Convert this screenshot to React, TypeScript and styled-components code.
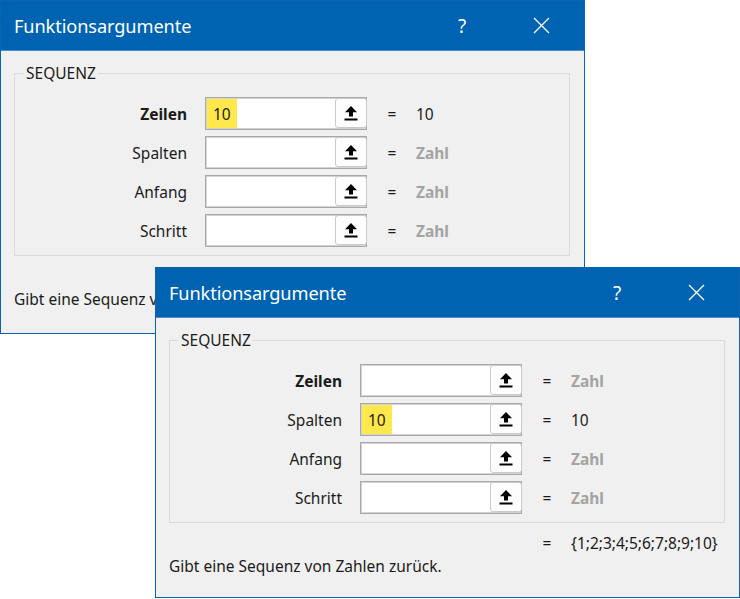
import React from 'react';
import styled, { createGlobalStyle } from 'styled-components';

const GlobalStyle = createGlobalStyle`
  html, body {
    margin: 0;
    padding: 0;
    background: #ffffff;
  }
  body {
    font-family: "Noto Sans", "Open Sans", sans-serif;
    color: #1b1b1b;
  }
`;

const Desktop = styled.div`
  position: relative;
  width: 740px;
  height: 599px;
  overflow: hidden;
  background: #ffffff;
`;

// windows sit on a free canvas, so their place is given by props
const Window = styled.div<{ $x: number; $y: number; $h: number }>`
  position: absolute;
  left: ${(p) => p.$x}px;
  top: ${(p) => p.$y}px;
  width: 585px;
  height: ${(p) => p.$h}px;
  box-sizing: border-box;
  border: 1px solid #0a64b2;
  background: #f0f0f0;
  display: flex;
  flex-direction: column;
`;

const TitleBar = styled.div`
  height: 49px;
  flex: none;
  background: #0063b1;
  color: #ffffff;
  display: flex;
  align-items: center;
  padding-left: 13px;
  border-bottom: 1px solid #4a8fcc;
`;

const Title = styled.div`
  flex: 1;
  font-size: 18.2px;
  letter-spacing: -0.1px;
`;

const Controls = styled.div`
  display: flex;
  gap: 33px;
  margin-right: 20px;
`;

const ControlButton = styled.div`
  width: 46px;
  height: 30px;
  display: flex;
  align-items: center;
  justify-content: center;
  font-size: 19px;
  color: #ffffff;
`;

const Body = styled.div`
  flex: 1;
  padding: 0 14px 0 13px;
  display: flex;
  flex-direction: column;
`;

const Group = styled.fieldset`
  margin: 12px 0 0 0;
  padding: 14px 0 8px 0;
  border: 1px solid #dadada;
  min-width: 0;
`;

const Legend = styled.legend`
  margin-left: 9px;
  padding: 0 2px;
  font-size: 15.5px;
  line-height: 20px;
  color: #1b1b1b;
`;

const Row = styled.div`
  display: flex;
  align-items: center;
  height: 33px;
  & + & {
    margin-top: 6px;
  }
`;

const Label = styled.div<{ $bold?: boolean }>`
  width: 172px;
  text-align: right;
  font-size: 15.5px;
  font-weight: ${(p) => (p.$bold ? 700 : 400)};
  color: #1b1b1b;
`;

const Field = styled.div`
  margin-left: 18px;
  width: 162px;
  height: 33px;
  box-sizing: border-box;
  border: 1px solid #a8a8a8;
  box-shadow: inset 0 0 0 1px #d4d4d4;
  background: #ffffff;
  display: flex;
  align-items: stretch;
`;

const FieldText = styled.div`
  flex: 1;
  display: flex;
  align-items: stretch;
  padding: 1px 0 1px 1px;
`;

const Highlight = styled.span`
  background: #ffe84c;
  display: flex;
  align-items: center;
  padding: 0 6px 0 6px;
  font-size: 15.5px;
  color: #1b1b1b;
`;

const PickButton = styled.div`
  width: 32px;
  margin: 0 -1px 1px 0;
  box-sizing: border-box;
  border: 1px solid #cacaca;
  border-radius: 3px;
  background: #fdfdfd;
  display: flex;
  align-items: center;
  justify-content: center;
`;

const Eq = styled.div`
  margin-left: 20px;
  width: 10px;
  font-size: 15.5px;
  text-align: center;
  color: #1b1b1b;
`;

const Value = styled.div<{ $hint?: boolean }>`
  margin-left: 19px;
  font-size: 15.5px;
  font-weight: ${(p) => (p.$hint ? 700 : 400)};
  color: ${(p) => (p.$hint ? '#a3a3a3' : '#1b1b1b')};
`;

const ResultRow = styled.div`
  display: flex;
  align-items: center;
  height: 22px;
  margin-top: 9px;
  padding-left: 353px;
`;

const Footer = styled.div`
  margin-top: 2px;
  font-size: 15.5px;
  line-height: 20px;
  color: #1b1b1b;
`;

const UploadIcon = () => (
  <svg width="14" height="16" viewBox="0 0 14 16">
    <path d="M7 1 L13 7.2 L9 7.2 L9 11.5 L5 11.5 L5 7.2 L1 7.2 Z" fill="#000" />
    <rect x="0.5" y="13.5" width="13" height="2" fill="#000" />
  </svg>
);

const CloseIcon = () => (
  <svg width="17" height="17" viewBox="0 0 17 17">
    <path d="M1 1 L16 16 M16 1 L1 16" stroke="#fff" strokeWidth="1.3" />
  </svg>
);

type Arg = { name: string; value?: string };

const argNames = ['Zeilen', 'Spalten', 'Anfang', 'Schritt'];

const Dialog = ({
  x,
  y,
  h,
  filled,
  result,
}: {
  x: number;
  y: number;
  h: number;
  filled: number;
  result?: string;
}) => {
  const args: Arg[] = argNames.map((name, i) => ({
    name,
    value: i === filled ? '10' : undefined,
  }));
  return (
    <Window $x={x} $y={y} $h={h}>
      <TitleBar>
        <Title>Funktionsargumente</Title>
        <Controls>
          <ControlButton>?</ControlButton>
          <ControlButton>
            <CloseIcon />
          </ControlButton>
        </Controls>
      </TitleBar>
      <Body>
        <Group>
          <Legend>SEQUENZ</Legend>
          {args.map((a, i) => (
            <Row key={a.name}>
              <Label $bold={i === 0}>{a.name}</Label>
              <Field>
                <FieldText>{a.value && <Highlight>{a.value}</Highlight>}</FieldText>
                <PickButton>
                  <UploadIcon />
                </PickButton>
              </Field>
              <Eq>=</Eq>
              <Value $hint={!a.value}>{a.value ?? 'Zahl'}</Value>
            </Row>
          ))}
        </Group>
        <ResultRow>
          {result && (
            <>
              <Eq>=</Eq>
              <Value>{result}</Value>
            </>
          )}
        </ResultRow>
        <Footer>Gibt eine Sequenz von Zahlen zurück.</Footer>
      </Body>
    </Window>
  );
};

export default function App() {
  return (
    <Desktop>
      <GlobalStyle />
      <Dialog x={0} y={0} h={334} filled={0} />
      <Dialog x={155} y={267} h={331} filled={1} result="{1;2;3;4;5;6;7;8;9;10}" />
    </Desktop>
  );
}
